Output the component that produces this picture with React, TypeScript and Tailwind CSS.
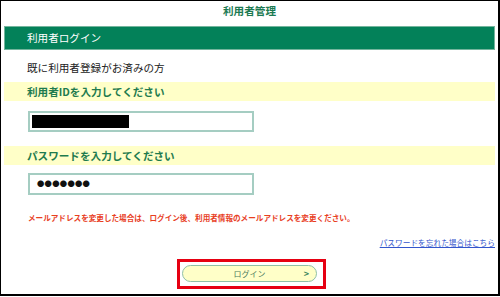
export default function App() {
  return (
    <div className="w-[500px] h-[297px] bg-white">
      <div
        className="w-[500px] h-[296px] box-border flex flex-col border-t border-l border-r-2 border-b-2 border-black px-[3px] text-[10.6px] leading-[14px]"
        style={{ fontFamily: '"Noto Sans CJK JP", "Noto Sans", sans-serif' }}
      >
        <div className="h-[19px] flex items-center justify-center font-bold text-[#1b7a52]">
          利用者管理
        </div>

        <div className="mt-[6px] h-[24px] flex items-center pl-[22px] bg-[#038159] border border-[#74b59d] text-white">
          利用者ログイン
        </div>

        <div className="h-[32px] flex items-center pt-[4px] pl-[23px] text-[#222]">
          既に利用者登録がお済みの方
        </div>

        <div className="h-[19px] flex items-center pl-[23px] bg-[#ffffc8] font-bold text-[#1e7b4e]">
          利用者IDを入力してください
        </div>
        <div className="mt-[10px] ml-[24px] w-[226px] h-[21px] flex items-center border-2 border-[#a5cdc2]">
          <div className="ml-[2px] w-[97px] h-[13px] bg-black" />
        </div>

        <div className="mt-[14px] h-[19px] flex items-center pl-[23px] bg-[#ffffc8] font-bold text-[#1e7b4e]">
          パスワードを入力してください
        </div>
        <div className="mt-[8px] ml-[24px] w-[226px] h-[22px] flex items-center border-2 border-[#a5cdc2] pl-[7px] text-[7.3px] leading-none tracking-[0.3px] text-[#111]">
          ●●●●●●●
        </div>

        <p className="mt-[18px] pl-[24px] text-[7.6px] leading-[10px] font-bold text-[#e8401f]">
          メールアドレスを変更した場合は、ログイン後、利用者情報のメールアドレスを変更ください。
        </p>

        <div className="mt-[15px] flex justify-end">
          <a href="#" className="text-[7.7px] leading-[10px] text-[#3355cc] underline">
            パスワードを忘れた場合はこちら
          </a>
        </div>

        <div className="mt-[11px] ml-[173px] w-[149px] h-[30px] border-[3px] border-[#e60012]">
          <button
            type="button"
            className="mt-[3px] ml-[2px] w-[135px] h-[17px] grid grid-cols-[1fr_auto_1fr] items-center rounded-full border border-[#8fc0a6] bg-[#ffffc8] text-[8px] leading-none text-[#4d7d5e]"
          >
            <span />
            <span>ログイン</span>
            <span className="justify-self-end pr-[7px] text-[9px] font-bold text-[#3f8a60]">&gt;</span>
          </button>
        </div>
      </div>
    </div>
  );
}
